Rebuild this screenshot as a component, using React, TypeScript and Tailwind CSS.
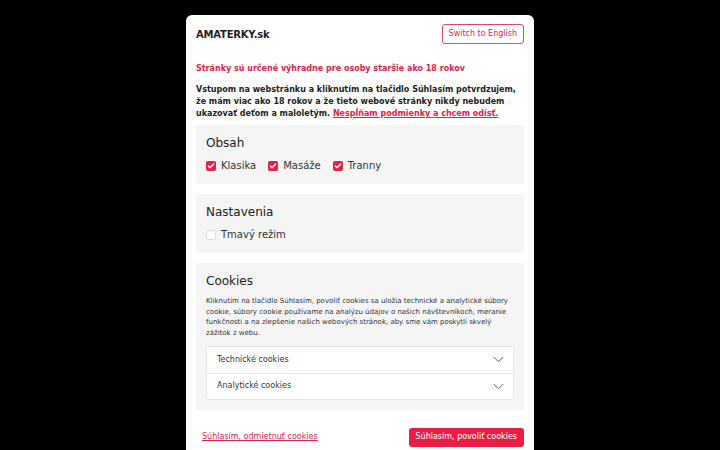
import { Check } from "lucide-react"

const CATEGORIES = ["Klasika", "Masáže", "Tranny"]
const COOKIE_GROUPS = ["Technické cookies", "Analytické cookies"]

function Box({ title, children, last }: { title: string; children: React.ReactNode; last?: boolean }) {
  return (
    <div className={`bg-[#f5f5f5] rounded-[3px] px-[10px] pt-[9px] ${last ? "pb-[10px]" : "pb-[11px]"}`}>
      <h3 className="text-[12px] leading-[18px] text-[#222] mb-[6px]">{title}</h3>
      {children}
    </div>
  )
}

export default function App() {
  return (
    <div
      className="w-[720px] h-[450px] bg-black overflow-hidden flex justify-center pt-[15px]"
      style={{ fontFamily: '"DejaVu Sans", sans-serif' }}
    >
      <div className="w-[348px] bg-white rounded-[6px] px-[10px] pt-[9px] pb-[10px] self-start">
        {/* Header */}
        <div className="flex items-center justify-between h-[20px]">
          <span className="text-[10px] font-bold text-[#222] tracking-[-0.2px]">AMATERKY.sk</span>
          <button className="h-[20px] px-[6px] border border-[#e0485f] rounded-[3px] text-[8px] text-[#e0274a] bg-white">
            Switch to English
          </button>
        </div>

        <p className="mt-[19px] text-[8px] font-bold text-[#e8214a] leading-[12px]">
          Stránky sú určené výhradne pre osoby staršie ako 18 rokov
        </p>
        <p className="mt-[9px] text-[8px] font-bold text-[#222] leading-[12px]">
          Vstupom na webstránku a kliknutím na tlačidlo Súhlasím potvrdzujem, že mám viac ako 18 rokov a že tieto webové stránky nikdy nebudem ukazovať deťom a maloletým.{" "}
          <a className="text-[#e8214a] underline">Nespĺňam podmienky a chcem odísť.</a>
        </p>

        <div className="mt-[5px] flex flex-col gap-[10px]">
          <Box title="Obsah">
            <div className="flex items-center gap-[12px]">
              {CATEGORIES.map((c) => (
                <label key={c} className="flex items-center gap-[5px] text-[10px] text-[#333]">
                  <span className="w-[10px] h-[10px] rounded-[2px] bg-[#e8214a] flex items-center justify-center">
                    <Check className="w-[8px] h-[8px] text-white" strokeWidth={4} />
                  </span>
                  {c}
                </label>
              ))}
            </div>
          </Box>

          <Box title="Nastavenia">
            <label className="flex items-center gap-[5px] text-[10px] text-[#333]">
              <span className="w-[10px] h-[10px] rounded-[2px] bg-white border border-[#ddd]" />
              Tmavý režim
            </label>
          </Box>

          <Box title="Cookies" last>
            <p className="text-[7px] leading-[10.7px] text-[#333] pr-[6px]">
              Kliknutím na tlačidlo Súhlasím, povoliť cookies sa uložia technické a analytické súbory cookie, súbory cookie používame na analýzu údajov o našich návštevníkoch, meranie funkčnosti a na zlepšenie našich webových stránok, aby sme vám poskytli skvelý zážitok z webu.
            </p>
            <div className="mt-[7px] bg-white border border-[#e6e6e6] rounded-[2px]">
              {COOKIE_GROUPS.map((g, i) => (
                <div
                  key={g}
                  className={`flex items-center justify-between h-[26px] pl-[10px] pr-[9px] text-[8px] text-[#333] ${i > 0 ? "border-t border-[#e6e6e6]" : ""}`}
                >
                  {g}
                  <svg width="11" height="7" viewBox="0 0 11 7" fill="none" className="text-[#666]">
                    <path d="M0.8 1 L5.5 5.8 L10.2 1" stroke="currentColor" strokeWidth="1" />
                  </svg>
                </div>
              ))}
            </div>
          </Box>
        </div>

        {/* Footer */}
        <div className="mt-[18px] flex items-center justify-between">
          <a className="text-[8px] text-[#e8214a] underline pl-[6px]">Súhlasím, odmietnuť cookies</a>
          <button className="h-[19px] px-[7px] rounded-[3px] bg-[#ee1c45] text-white text-[8px]">
            Súhlasím, povoliť cookies
          </button>
        </div>
      </div>
    </div>
  )
}
